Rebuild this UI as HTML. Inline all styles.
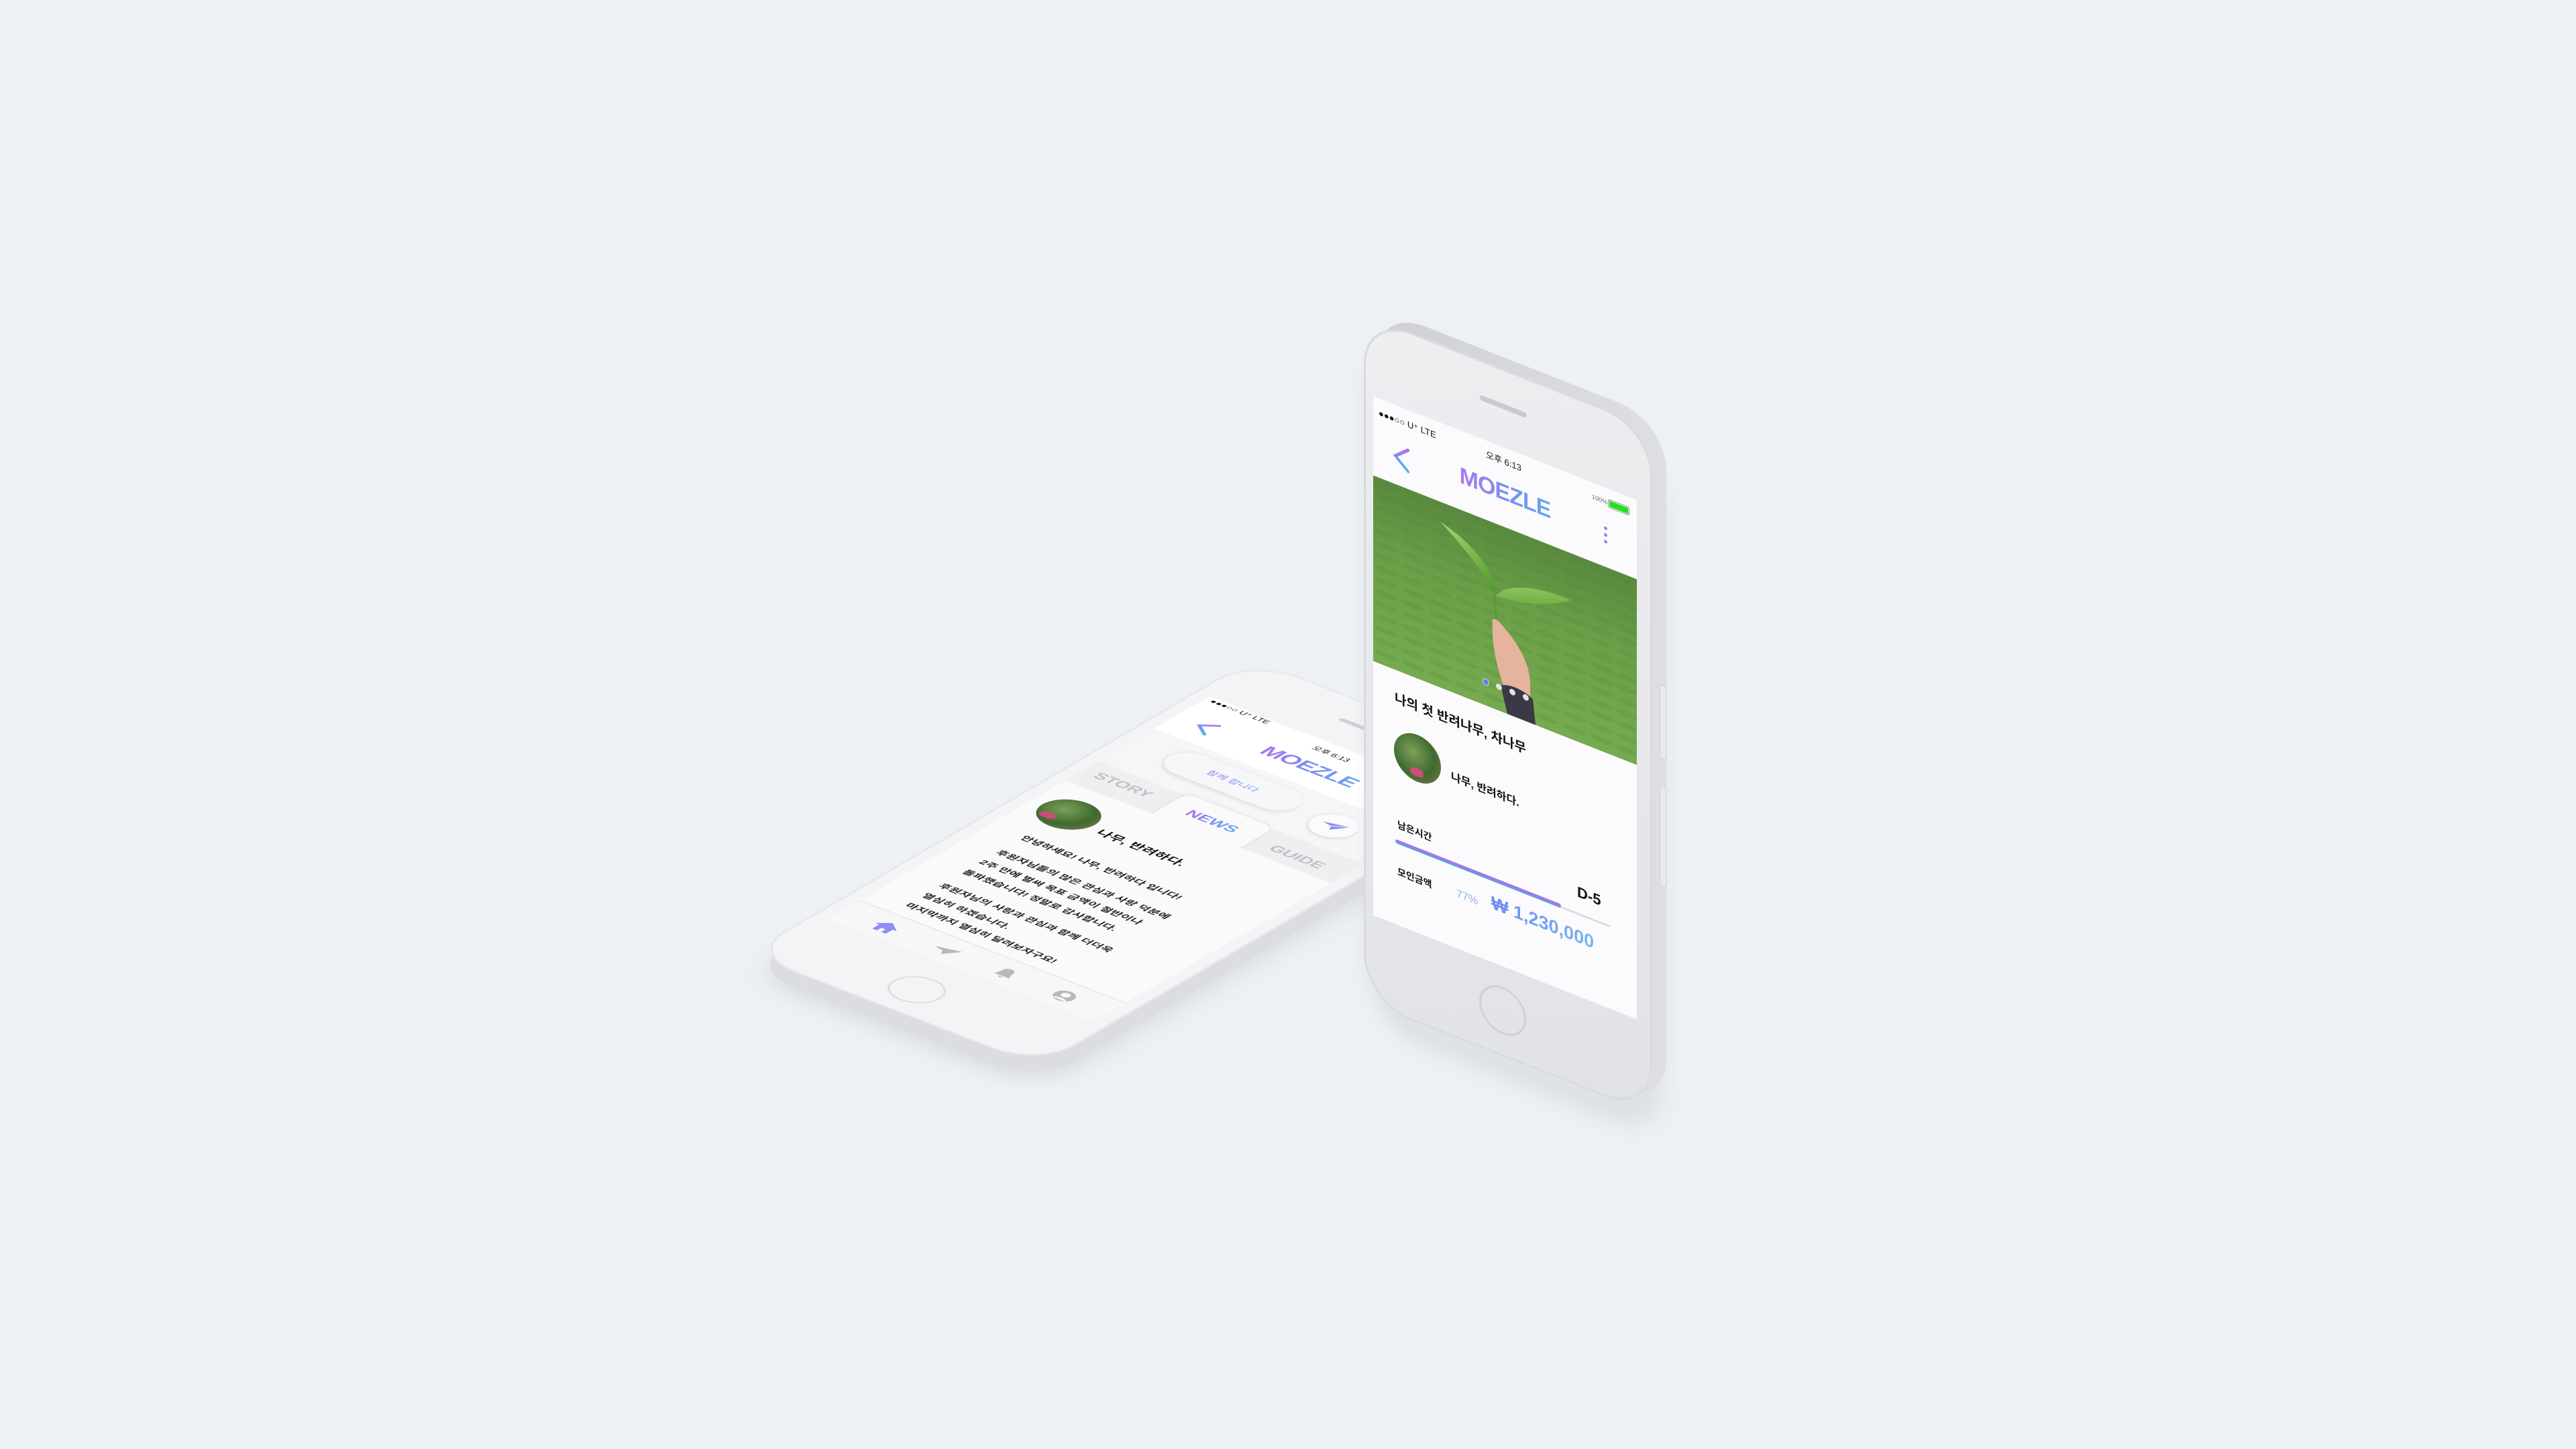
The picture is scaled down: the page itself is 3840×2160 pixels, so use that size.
<!DOCTYPE html>
<html><head><meta charset="utf-8">
<style>
*{margin:0;padding:0;box-sizing:border-box}
html,body{width:3840px;height:2160px;overflow:hidden;background:#edf1f4;font-family:"Liberation Sans","Noto Sans CJK KR",sans-serif}
.abs{position:absolute}
.t{position:absolute;white-space:nowrap;color:#111}
.grad{background:linear-gradient(90deg,#c06cf0,#7a8ff0 50%,#5fb0f0);-webkit-background-clip:text;background-clip:text;color:transparent !important;-webkit-text-fill-color:transparent}
.body{border-radius:72px;background:linear-gradient(160deg,#eeeef1,#e1e2e6)}
.screen{position:absolute;background:#fbfbfd;overflow:hidden}
</style></head><body>

<!-- LEFT PHONE (flat) -->
<div class="abs" style="left:0;top:0;transform-origin:0 0;transform:matrix(1.0076,0.3893,-0.7351,0.4289,1803,1075);">
  <div class="abs body" style="left:-20px;top:-113px;width:433px;height:1025px;background:#cfd1d7;filter:blur(18px);opacity:.6"></div>
</div>
<div class="abs" style="left:0;top:0;transform-origin:0 0;transform:matrix(1.0076,0.3893,-0.7351,0.4289,1803,1062);">
  <div class="abs body" style="left:-20px;top:-113px;width:433px;height:1025px;background:#dcdde2"></div>
</div>
<div class="abs" style="left:0;top:0;transform-origin:0 0;transform:matrix(1.0076,0.3893,-0.7351,0.4289,1803,1038);">
  <div class="abs body" style="left:-20px;top:-113px;width:433px;height:1025px;background:#f4f4f6;box-shadow:inset 0 0 0 3px #e6e7ea"></div>
  <div class="abs" style="left:150px;top:-62px;width:90px;height:8px;border-radius:4px;background:#cfd0d4"></div>
  <div class="abs" style="left:152px;top:815px;width:70px;height:70px;border-radius:50%;border:3px solid #dedfe3"></div>
  <div class="screen" style="left:0;top:0;width:393px;height:774px;background:#f6f6f8">
    <div class="abs" style="left:0;top:0;width:393px;height:112px;background:#fff"></div>
    <div class="t" style="left:8px;top:0;font-size:13px">●●●○○ U⁺ LTE</div>
    <div class="t" style="left:170px;top:12px;font-size:13px">오후 6:13</div>
    <svg class="abs" style="left:30px;top:50px" width="28" height="38"><defs><linearGradient id="ga" x1="0" y1="0" x2="0" y2="1"><stop offset="0" stop-color="#b06cf0"/><stop offset="1" stop-color="#4fb8f0"/></linearGradient></defs><polyline points="24,4 5,19 24,34" fill="none" stroke="url(#ga)" stroke-width="4.5" stroke-linecap="round"/></svg>
    <div class="t grad" style="left:100px;width:193px;text-align:center;top:48px;font-size:34px;font-weight:bold;letter-spacing:-1px">MOEZLE</div>
    <div class="abs" style="left:56px;top:128px;width:190px;height:62px;border-radius:31px;background:#f7f7f9;box-shadow:0 3px 8px rgba(0,0,0,.12)"></div>
    <div class="t grad" style="left:90px;width:120px;text-align:center;top:148px;font-size:15px">함께 합니다</div>
    <div class="abs" style="left:278px;top:141px;width:60px;height:60px;border-radius:50%;background:#fbfbfc;box-shadow:0 2px 6px rgba(0,0,0,.15)"></div>
    <svg class="abs" style="left:290px;top:158px" width="38" height="26"><path d="M2 12 L36 2 L20 24 L16 15 Z" fill="#8a8df0"/><path d="M16 15 L36 2" stroke="#fff" stroke-width="1.5"/></svg>
    <div class="abs" style="left:0;top:226px;width:393px;height:70px;background:#efeff2"></div>
    <div class="t" style="left:18px;top:242px;font-size:24px;font-weight:bold;color:#c2c2c6">STORY</div>
    <div class="abs" style="left:128px;top:222px;width:130px;height:76px;border-radius:16px 16px 0 0;background:#fafafb;box-shadow:0 -2px 6px rgba(0,0,0,.08)"></div>
    <div class="t grad" style="left:150px;width:86px;text-align:center;top:246px;font-size:24px;font-weight:bold">NEWS</div>
    <div class="t" style="left:285px;top:252px;font-size:24px;font-weight:bold;color:#c2c2c6">GUIDE</div>
    <div class="abs" style="left:0;top:292px;width:393px;height:420px;background:#fafafb"></div>
    <div class="abs" style="left:16px;top:322px;width:78px;height:78px;border-radius:50%;background:radial-gradient(circle at 35% 40%,#7ea05a,#3f6a2e 55%,#8a7a60);overflow:hidden"><div class="abs" style="left:10px;top:50px;width:22px;height:14px;background:#d04a7a;border-radius:40%"></div></div>
    <div class="t" style="left:107px;top:356px;font-size:20px;font-weight:bold">나무, 반려하다.</div>
    <div class="t" style="left:48px;top:430px;font-size:16px;font-weight:bold;line-height:34px;color:#222">안녕하세요! 나무, 반려하다 입니다!</div>
    <div class="t" style="left:48px;top:480px;font-size:16px;font-weight:bold;line-height:34px;color:#222">후원자님들의 많은 관심과 사랑 덕분에<br>2주 만에 벌써 목표 금액이 절반이나<br>돌파했습니다! 정말로 감사합니다.</div>
    <div class="t" style="left:48px;top:596px;font-size:16px;font-weight:bold;line-height:34px;color:#222">후원자님의 사랑과 관심과 함께 더더욱<br>열심히 하겠습니다.<br>마지막까지 열심히 달려보자구요!</div>
    <div class="abs" style="left:0;top:708px;width:393px;height:66px;background:#f7f7f8;border-top:2px solid #e6e6e8"></div>
    <svg class="abs" style="left:46px;top:728px" width="36" height="32"><path d="M18 2 L34 16 H28 V30 H21 V21 H15 V30 H8 V16 H2 Z" fill="#8d8ef2"/></svg>
    <svg class="abs" style="left:134px;top:732px" width="38" height="26"><path d="M2 12 L36 2 L20 24 L16 15 Z" fill="#b8b8bc"/></svg>
    <svg class="abs" style="left:226px;top:728px" width="30" height="32"><path d="M15 3 C8 3 7 10 7 16 L4 24 H26 L23 16 C23 10 22 3 15 3 Z M12 26 A3 3 0 0 0 18 26 Z" fill="#b8b8bc"/></svg>
    <svg class="abs" style="left:312px;top:728px" width="32" height="32"><circle cx="16" cy="16" r="14" fill="#b8b8bc"/><circle cx="16" cy="13" r="6" fill="#f7f7f8"/><path d="M6 27 C9 20 23 20 26 27" fill="#f7f7f8"/></svg>
  </div>
</div>

<!-- RIGHT PHONE (standing) -->
<div class="abs" style="left:2040px;top:500px;width:440px;height:1030px;transform-origin:0 0;transform:skewY(21.5deg);border-radius:80px;background:rgba(150,155,165,.18);filter:blur(14px)"></div>
<div class="abs body" style="left:2052px;top:458px;width:432px;height:1025px;transform-origin:0 0;transform:skewY(21.5deg);background:linear-gradient(90deg,#cfd0d5,#dedfe3)"></div>
<div class="abs" style="left:2474px;top:1020px;width:10px;height:110px;transform-origin:0 0;transform:skewY(21.5deg);border-radius:4px;background:#e9eaee;border:1px solid #cfd0d5"></div>
<div class="abs" style="left:2474px;top:1170px;width:10px;height:150px;transform-origin:0 0;transform:skewY(21.5deg);border-radius:4px;background:#e9eaee;border:1px solid #cfd0d5"></div>
<div class="abs body" style="left:2033px;top:468px;width:430px;height:1025px;transform-origin:0 0;transform:skewY(21.5deg);box-shadow:inset 0 0 0 3px #d9dade">
  <div class="abs" style="left:173px;top:52px;width:70px;height:8px;border-radius:4px;background:#c9cacf"></div>
  <div class="abs" style="left:172px;top:922px;width:70px;height:70px;border-radius:50%;border:3px solid #d0d1d6"></div>
  <div class="screen" style="left:14px;top:117px;width:393px;height:774px">
    <div class="t" style="left:8px;top:14px;font-size:13px">●●●○○ U⁺ LTE</div>
    <div class="t" style="left:168px;top:10px;font-size:13px">오후 6:13</div>
    <div class="t" style="left:326px;top:16px;font-size:9px;color:#666">100%</div>
    <div class="abs" style="left:350px;top:15px;width:32px;height:13px;border:1.5px solid #888;border-radius:3px;padding:1px"><div style="width:100%;height:100%;background:#22e022;border-radius:1px"></div></div>
    <svg class="abs" style="left:28px;top:56px" width="28" height="40"><defs><linearGradient id="gb" x1="0" y1="0" x2="0" y2="1"><stop offset="0" stop-color="#b06cf0"/><stop offset="1" stop-color="#4fb8f0"/></linearGradient></defs><polyline points="24,4 5,20 24,36" fill="none" stroke="url(#gb)" stroke-width="4.5" stroke-linecap="round"/></svg>
    <div class="t grad" style="left:100px;width:193px;text-align:center;top:48px;font-size:34px;font-weight:bold;letter-spacing:-1px">MOEZLE</div>
    <div class="abs" style="left:344px;top:58px;width:5px;height:5px;border-radius:50%;background:#b070f0"></div>
    <div class="abs" style="left:344px;top:68px;width:5px;height:5px;border-radius:50%;background:#9a80f0"></div>
    <div class="abs" style="left:344px;top:78px;width:5px;height:5px;border-radius:50%;background:#8890f0"></div>
    <svg class="abs" style="left:0;top:118px" width="393" height="277" viewBox="0 0 393 277">
      <defs>
        <linearGradient id="bg" x1="0" y1="0" x2="0" y2="1"><stop offset="0" stop-color="#5a8a3e"/><stop offset=".4" stop-color="#6a9f48"/><stop offset="1" stop-color="#76ab50"/></linearGradient>
        <linearGradient id="lf" x1="0" y1="0" x2="1" y2="1"><stop offset="0" stop-color="#a6d66e"/><stop offset="1" stop-color="#4f9a2c"/></linearGradient>
        <pattern id="rows" width="40" height="18" patternUnits="userSpaceOnUse"><ellipse cx="20" cy="9" rx="18" ry="4" fill="#4e7d30" opacity=".18"/></pattern>
      </defs>
      <rect width="393" height="277" fill="url(#bg)"/>
      <rect width="393" height="277" fill="url(#rows)"/>
      <path d="M183 150 C183 135 182 125 181 100" stroke="#5a9a30" stroke-width="3" fill="none"/>
      <path d="M181 104 C165 80 130 50 100 30 C140 40 180 65 181 104 Z" fill="url(#lf)"/>
      <path d="M183 108 C200 80 250 68 295 70 C262 92 225 105 183 108 Z" fill="url(#lf)"/>
      <path d="M178 150 C175 144 182 140 190 146 C203 156 218 168 228 190 C236 208 236 235 230 258 L205 270 L195 240 C186 215 176 185 178 150 Z" fill="#e6b49c"/>
      <path d="M190 238 C205 230 225 232 238 240 L242 277 L200 277 Z" fill="#3a3945"/>
    </svg>
    <div class="abs" style="left:163px;top:355px;width:10px;height:10px;border-radius:50%;background:#6a78e0;border:1px solid #cfd4ff"></div>
    <div class="abs" style="left:183px;top:355px;width:9px;height:9px;border-radius:50%;background:#e4e4e8"></div>
    <div class="abs" style="left:203px;top:355px;width:9px;height:9px;border-radius:50%;background:#e4e4e8"></div>
    <div class="abs" style="left:223px;top:355px;width:9px;height:9px;border-radius:50%;background:#e4e4e8"></div>
    <div class="t" style="left:32px;top:422px;font-size:19px;font-weight:bold">나의 첫 반려나무, 차나무</div>
    <div class="abs" style="left:31px;top:479px;width:70px;height:70px;border-radius:50%;background:radial-gradient(circle at 40% 40%,#7ea05a,#3f6a2e 55%,#8a7a60);overflow:hidden"><div class="abs" style="left:24px;top:50px;width:20px;height:12px;background:#d04a7a;border-radius:40%"></div></div>
    <div class="t" style="left:116px;top:507px;font-size:16px;font-weight:bold">나무, 반려하다.</div>
    <div class="t" style="left:36px;top:614px;font-size:14px;font-weight:bold">남은시간</div>
    <div class="abs" style="left:280px;top:650px;width:73px;height:3px;background:#dcdce0"></div>
    <div class="abs" style="left:33px;top:647px;width:247px;height:6px;border-radius:3px;background:linear-gradient(180deg,#b070ee 0 45%,#5fa0d8 55%)"></div>
    <div class="t" style="left:304px;top:606px;font-size:22px;font-weight:bold">D-5</div>
    <div class="t" style="left:36px;top:684px;font-size:14px;font-weight:bold">모인금액</div>
    <div class="t" style="left:124px;top:684px;font-size:16px;color:#8fb0f0">77%</div>
    <div class="t" style="left:176px;top:670px;font-size:27px;font-weight:bold;background:linear-gradient(90deg,#6c8cf0,#78b8f2);-webkit-background-clip:text;background-clip:text;color:transparent;-webkit-text-fill-color:transparent">₩ 1,230,000</div>
  </div>
</div>
</body></html>
